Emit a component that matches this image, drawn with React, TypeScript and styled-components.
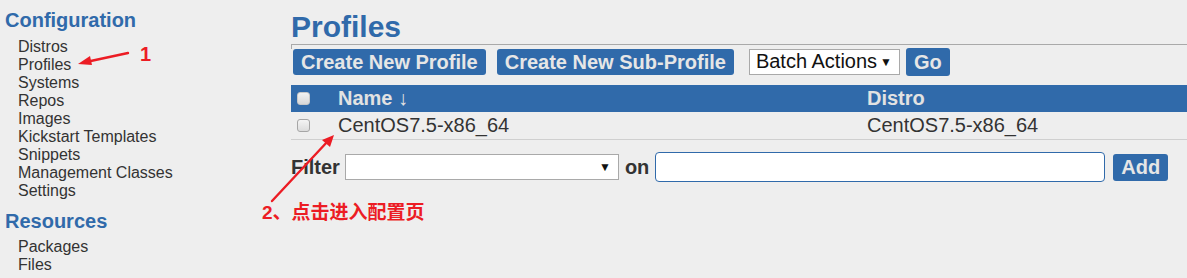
import React from 'react'
import styled, { createGlobalStyle } from 'styled-components'

const BLUE = '#306aaa'
const RED = '#ec1c24'

const Global = createGlobalStyle`
  html, body {
    margin: 0;
    padding: 0;
    background: #eeeeee;
    font-family: "Liberation Sans", Arial, sans-serif;
    color: #333;
  }
`

const Page = styled.div`
  position: relative;
  display: flex;
  width: 1187px;
  height: 278px;
  overflow: hidden;
`

const Sidebar = styled.nav`
  width: 286px;
  padding: 9px 0 0 5px;
  flex-shrink: 0;
`

const SideHeading = styled.h2<{ $top?: number }>`
  margin: ${(p) => p.$top ?? 0}px 0 0;
  font-size: 20px;
  line-height: 23px;
  font-weight: bold;
  color: ${BLUE};
`

const SideList = styled.ul<{ $top: number }>`
  list-style: none;
  margin: ${(p) => p.$top}px 0 0;
  padding: 0 0 0 13px;
`

const SideItem = styled.li`
  font-size: 16px;
  line-height: 18px;
  color: #333;
`

const Main = styled.main`
  flex: 1;
  padding-top: 10px;
`

const Title = styled.h1`
  margin: 0;
  font-size: 30px;
  line-height: 34px;
  font-weight: bold;
  color: ${BLUE};
`

const Toolbar = styled.div`
  display: flex;
  align-items: center;
  height: 31px;
  padding: 1px 0 0 2px;
  border-top: 1px solid #a9a9a9;
  position: relative;

  &::before {
    content: '';
    position: absolute;
    left: 0;
    top: 0;
    width: 1px;
    height: 4px;
    background: #a9a9a9;
  }
`

const Button = styled.button<{ $ml?: number; $h?: number }>`
  margin-left: ${(p) => p.$ml ?? 0}px;
  height: ${(p) => p.$h ?? 26}px;
  padding: 0 8px;
  border: none;
  border-radius: 3px;
  background: ${BLUE};
  color: #e6e6e6;
  font-family: "Liberation Sans", Arial, sans-serif;
  font-size: 20px;
  font-weight: bold;
  line-height: 26px;
`

const Select = styled.div<{ $w: number; $ml?: number }>`
  display: flex;
  align-items: center;
  justify-content: space-between;
  box-sizing: border-box;
  width: ${(p) => p.$w}px;
  height: 26px;
  margin-left: ${(p) => p.$ml ?? 0}px;
  padding: 0 7px 0 6px;
  background: #fff;
  border: 1px solid #a9a9a9;
  font-size: 20px;
  color: #111;
`

const Caret = styled.span`
  font-size: 12px;
  color: #111;
`

const Table = styled.div`
  margin-top: 8px;
`

const Row = styled.div<{ $head?: boolean }>`
  display: grid;
  grid-template-columns: 42px 529px 1fr;
  align-items: center;
  height: 27px;
  background: ${(p) => (p.$head ? BLUE : 'transparent')};
  color: ${(p) => (p.$head ? '#e2e2e2' : '#333')};
  font-weight: ${(p) => (p.$head ? 'bold' : 'normal')};
  border-bottom: ${(p) => (p.$head ? 'none' : '1px solid #cfcfcf')};
  font-size: 20px;
`

const Cell = styled.div`
  padding-left: 5px;
  white-space: nowrap;
`

const Check = styled.span<{ $head?: boolean }>`
  display: block;
  box-sizing: border-box;
  width: 13px;
  height: 13px;
  margin-left: 1px;
  border: 1px solid ${(p) => (p.$head ? '#c8c8c8' : '#a6a6a6')};
  border-radius: 3px;
  background: ${(p) =>
    p.$head ? 'linear-gradient(#f2f2f2, #d8d8d8)' : 'linear-gradient(#f4f4f4, #dcdcdc)'};
`

const FilterRow = styled.div`
  display: flex;
  align-items: center;
  height: 30px;
  margin-top: 12px;
`

const Label = styled.span<{ $ml?: number }>`
  margin-left: ${(p) => p.$ml ?? 0}px;
  font-size: 20px;
  font-weight: bold;
  color: #333;
`

const TextInput = styled.input`
  box-sizing: border-box;
  width: 450px;
  height: 30px;
  margin-left: 6px;
  border: 1px solid ${BLUE};
  border-radius: 4px;
  background: #fff;
  outline: none;
`

const Annotations = styled.svg`
  position: absolute;
  left: 0;
  top: 0;
  pointer-events: none;
`

const Note = styled.span<{ $x: number; $y: number; $size: number }>`
  position: absolute;
  left: ${(p) => p.$x}px;
  top: ${(p) => p.$y}px;
  font-size: ${(p) => p.$size}px;
  line-height: 1;
  font-weight: bold;
  color: ${RED};
  font-family: "Liberation Sans", "Noto Sans CJK SC", sans-serif;
  white-space: nowrap;
`

const config = ['Distros', 'Profiles', 'Systems', 'Repos', 'Images', 'Kickstart Templates', 'Snippets', 'Management Classes', 'Settings']
const resources = ['Packages', 'Files']

export default function App() {
  return (
    <Page>
      <Global />
      <Sidebar>
        <SideHeading>Configuration</SideHeading>
        <SideList $top={6}>
          {config.map((c) => (
            <SideItem key={c}>{c}</SideItem>
          ))}
        </SideList>
        <SideHeading $top={10}>Resources</SideHeading>
        <SideList $top={5}>
          {resources.map((c) => (
            <SideItem key={c}>{c}</SideItem>
          ))}
        </SideList>
      </Sidebar>
      <Main>
        <Title>Profiles</Title>
        <Toolbar>
          <Button>Create New Profile</Button>
          <Button $ml={11}>Create New Sub-Profile</Button>
          <Select $w={151} $ml={15}>
            <span>Batch Actions</span>
            <Caret>▼</Caret>
          </Select>
          <Button $ml={6} $h={28}>Go</Button>
        </Toolbar>
        <Table>
          <Row $head>
            <Cell><Check $head /></Cell>
            <Cell>Name ↓</Cell>
            <Cell>Distro</Cell>
          </Row>
          <Row>
            <Cell><Check /></Cell>
            <Cell>CentOS7.5-x86_64</Cell>
            <Cell>CentOS7.5-x86_64</Cell>
          </Row>
        </Table>
        <FilterRow>
          <Label>Filter</Label>
          <Select $w={274} $ml={5}>
            <span />
            <Caret>▼</Caret>
          </Select>
          <Label $ml={6}>on</Label>
          <TextInput />
          <Button $ml={8} $h={27}>Add</Button>
        </FilterRow>
      </Main>

      <Annotations width="1187" height="278" viewBox="0 0 1187 278">
        <line x1="128" y1="53" x2="86" y2="62" stroke={RED} strokeWidth="2.4" strokeLinecap="round" />
        <polygon points="78,64 90,56 92,65" fill={RED} />
        <line x1="272" y1="201" x2="328" y2="141" stroke={RED} strokeWidth="2.4" strokeLinecap="round" />
        <polygon points="334,135 322,140 330,147" fill={RED} />
      </Annotations>
      <Note $x={140} $y={44} $size={20}>1</Note>
      <Note $x={262} $y={203} $size={19}>2、点击进入配置页</Note>
    </Page>
  )
}
